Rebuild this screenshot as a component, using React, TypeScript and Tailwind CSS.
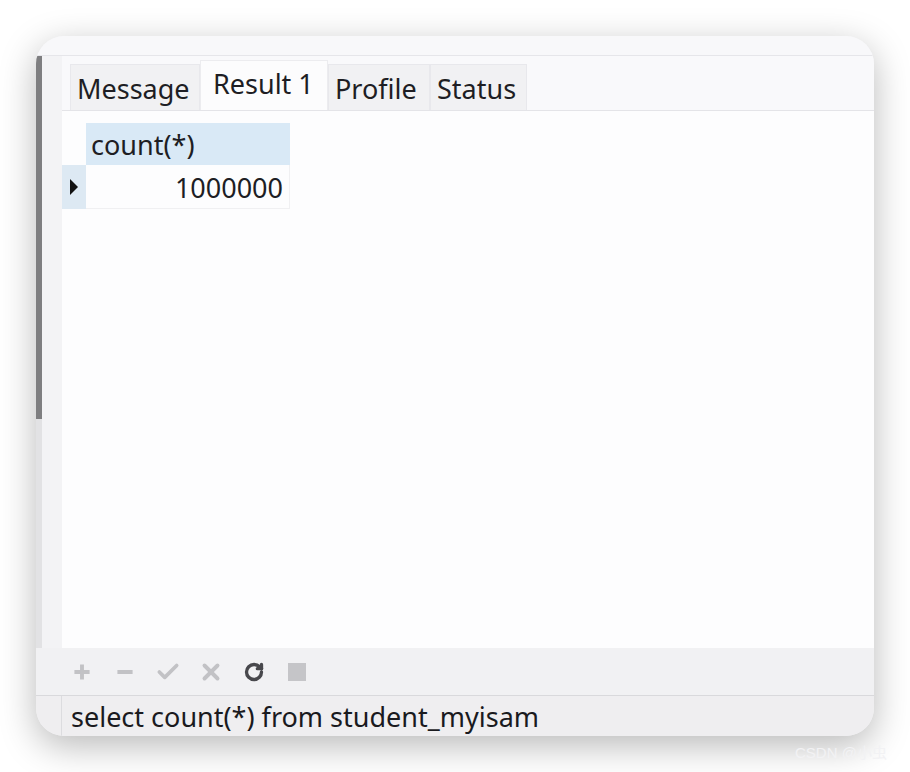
import { Plus, Minus, Check, X, RotateCw } from "lucide-react";

const FONT = { fontFamily: '"Noto Sans", "Open Sans", sans-serif' };

const tabs = [
  { label: "Message", w: "w-[130px]", active: false },
  { label: "Result 1", w: "w-[128px]", active: true },
  { label: "Profile", w: "w-[102px]", active: false },
  { label: "Status", w: "w-[97px]", active: false },
];

function Tabs() {
  return (
    <div className="flex h-[55px] shrink-0 items-end border-b border-[#e4e4e8] bg-[#f9f9fb] pl-[8px]">
      {tabs.map((t) =>
        t.active ? (
          <div
            key={t.label}
            className={`${t.w} flex h-[50px] items-center border-x border-t border-[#ececef] bg-[#fcfcfd] px-[12px] pb-[2px] text-[27px] text-[#1e1e24]`}
          >
            {t.label}
          </div>
        ) : (
          <div
            key={t.label}
            className={`${t.w} flex h-[46px] items-center border-x border-t border-[#e8e8ec] bg-[#f1f1f3] px-[6px] pt-[4px] text-[27px] text-[#1e1e24]`}
          >
            {t.label}
          </div>
        ),
      )}
    </div>
  );
}

function ResultGrid() {
  return (
    <div className="pt-[12px]">
      <div className="flex">
        <div className="w-[24px]" />
        <div className="flex h-[42px] w-[204px] items-center bg-[#d9e9f6] px-[5px] pt-[3px] text-[27px] text-[#1e1e24]">
          count(*)
        </div>
      </div>
      <div className="flex">
        <div className="flex h-[44px] w-[24px] items-center justify-center bg-[#dde9f3]">
          <svg width="10" height="18" viewBox="0 0 10 18">
            <path d="M1 1 L9 9 L1 17 Z" fill="#111" />
          </svg>
        </div>
        <div className="flex h-[44px] w-[204px] items-center justify-end border-b border-r border-[#f0f0f2] px-[6px] pt-[3px] text-[27px] text-[#1e1e24]">
          1000000
        </div>
      </div>
    </div>
  );
}

function Toolbar() {
  return (
    <div className="flex h-[47px] shrink-0 items-center gap-[17px] bg-[#f1f1f3] pl-[33px]">
      <Plus size={26} strokeWidth={3.6} strokeLinecap="butt" className="text-[#c2c2c5]" />
      <Minus size={26} strokeWidth={3.6} strokeLinecap="butt" className="text-[#c2c2c5]" />
      <Check size={26} strokeWidth={3.4} className="text-[#c2c2c5]" />
      <X size={26} strokeWidth={3.6} className="text-[#c2c2c5]" />
      <div className="flex h-[26px] w-[26px] items-center justify-center">
        <RotateCw size={20} strokeWidth={4} className="text-[#48484c]" />
      </div>
      <div className="flex h-[26px] w-[26px] items-center justify-center">
        <div className="h-[18px] w-[18px] bg-[#c5c5c8]" />
      </div>
    </div>
  );
}

export default function App() {
  return (
    <div className="relative h-[772px] w-[910px] overflow-hidden bg-white pl-[36px] pt-[36px]" style={FONT}>
      <div className="flex h-[700px] w-[838px] flex-col overflow-hidden rounded-[28px] bg-[#f3f3f5] shadow-[0_10px_36px_rgba(0,0,0,0.28)]">
        <div className="h-[20px] shrink-0 border-b border-[#e6e6ea] bg-[#f8f8fa]" />
        <div className="flex min-h-0 flex-1">
          <div className="flex w-[6px] flex-col">
            <div className="h-[363px] bg-[#7e7e80]" />
            <div className="flex-1 bg-[#e2e2e4]" />
          </div>
          <div className="w-[20px] bg-[#f3f3f5]" />
          <div className="flex flex-1 flex-col">
            <Tabs />
            <div className="flex-1 bg-[#fdfdfe]">
              <ResultGrid />
            </div>
          </div>
        </div>
        <Toolbar />
        <div className="h-px shrink-0 bg-[#d9d9dc]" />
        <div className="flex h-[40px] shrink-0 bg-[#efeef0]">
          <div className="w-[26px] border-r border-[#dcdcdf]" />
          <div className="flex items-center pl-[9px] text-[27px] leading-none text-[#1a1a1e]">
            select count(*) from student_myisam
          </div>
        </div>
      </div>
      <div
        className="absolute left-[795px] top-[742px] text-[15px] text-[#f2f2f4]"
        style={{ fontFamily: '"Liberation Sans", "Noto Sans CJK SC", sans-serif' }}
      >
        CSDN @小虫
      </div>
    </div>
  );
}
